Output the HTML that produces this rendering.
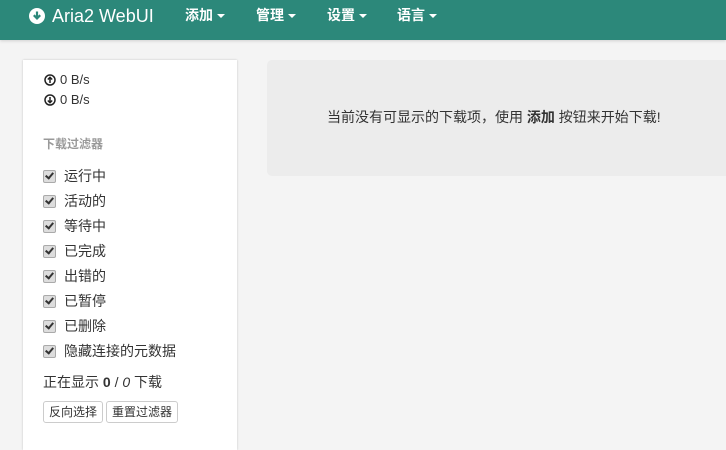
<!DOCTYPE html>
<html><head><meta charset="utf-8"><style>
body{margin:0;width:726px;height:437px;overflow:hidden;background:#f4f4f4;font-family:"Liberation Sans","Noto Sans CJK SC",sans-serif;color:#333;font-size:13px}
.nav{position:absolute;left:0;top:0;width:726px;height:40px;background:#2c887a;box-shadow:0 1px 3px rgba(0,0,0,.15);color:#fff}
.brand{position:absolute;left:29px;top:5px;font-size:18px;line-height:22px;display:flex;align-items:center}
.brand svg{margin-right:7px}
.m{position:absolute;top:6px;font-size:14px;font-weight:bold;line-height:18px}
.caret{display:inline-block;width:0;height:0;border-left:4px solid transparent;border-right:4px solid transparent;border-top:4px solid #fff;vertical-align:middle;margin-left:4px}
.side{position:absolute;left:23px;top:60px;width:214px;height:390px;background:#fff;box-shadow:0 0 2px rgba(0,0,0,.2)}
.sp{position:absolute;left:21px;font-size:13px;display:flex;align-items:center;line-height:16px}
.sp svg{margin-right:4px}
.h{position:absolute;left:20px;top:75px;font-size:12px;color:#999;font-weight:bold}
.cb{position:absolute;left:20px;display:flex;align-items:center;font-size:14px;line-height:16px}
.cb i{display:inline-block;width:11px;height:11px;border:1px solid #aaa;border-radius:2px;background:#ddd;margin-right:8px;position:relative}
.cb i:after{content:"";position:absolute;left:3px;top:0px;width:3px;height:6px;border:solid #333;border-width:0 2px 2px 0;transform:rotate(40deg)}
.btn{position:absolute;top:341px;height:20px;border:1px solid #ccc;border-radius:3px;background:#fff;font-size:12px;line-height:20px;padding:0 5px}
.box{position:absolute;left:267px;top:60px;width:470px;height:116px;background:#ececec;border-radius:5px}
.msg{position:absolute;left:60px;top:48px;font-size:14px;line-height:18px}
</style></head><body>
<div class="nav">
 <div class="brand"><svg width="16" height="16" viewBox="0 0 16 16"><circle cx="8" cy="8" r="8" fill="#fff"/><path d="M8 3.5v6.5M4.8 7.2L8 10.4l3.2-3.2" stroke="#2c887a" stroke-width="2.2" fill="none"/></svg>Aria2 WebUI</div>
 <div class="m" style="left:185px">添加<span class="caret"></span></div>
 <div class="m" style="left:256px">管理<span class="caret"></span></div>
 <div class="m" style="left:327px">设置<span class="caret"></span></div>
 <div class="m" style="left:397px">语言<span class="caret"></span></div>
</div>
<div class="side">
 <div class="sp" style="top:12px"><svg width="12" height="12" viewBox="0 0 12 12"><circle cx="6" cy="6" r="5" fill="none" stroke="#222" stroke-width="1.5"/><path d="M6 9V3.5M3.8 5.5L6 3.3l2.2 2.2" stroke="#222" stroke-width="1.5" fill="none"/></svg>0 B/s</div>
 <div class="sp" style="top:32px"><svg width="12" height="12" viewBox="0 0 12 12"><circle cx="6" cy="6" r="5" fill="none" stroke="#222" stroke-width="1.5"/><path d="M6 3v5.5M3.8 6.5L6 8.7l2.2-2.2" stroke="#222" stroke-width="1.5" fill="none"/></svg>0 B/s</div>
 <div class="h">下载过滤器</div>
 <div class="cb" style="top:108px"><i></i>运行中</div>
 <div class="cb" style="top:133px"><i></i>活动的</div>
 <div class="cb" style="top:158px"><i></i>等待中</div>
 <div class="cb" style="top:183px"><i></i>已完成</div>
 <div class="cb" style="top:208px"><i></i>出错的</div>
 <div class="cb" style="top:233px"><i></i>已暂停</div>
 <div class="cb" style="top:258px"><i></i>已删除</div>
 <div class="cb" style="top:283px"><i></i>隐藏连接的元数据</div>
 <div style="position:absolute;left:20px;top:312px;font-size:14px">正在显示 <b>0</b> / <i>0</i> 下载</div>
 <div class="btn" style="left:20px">反向选择</div>
 <div class="btn" style="left:83px">重置过滤器</div>
</div>
<div class="box"><div class="msg">当前没有可显示的下载项，使用 <b>添加</b> 按钮来开始下载!</div></div>
</body></html>
